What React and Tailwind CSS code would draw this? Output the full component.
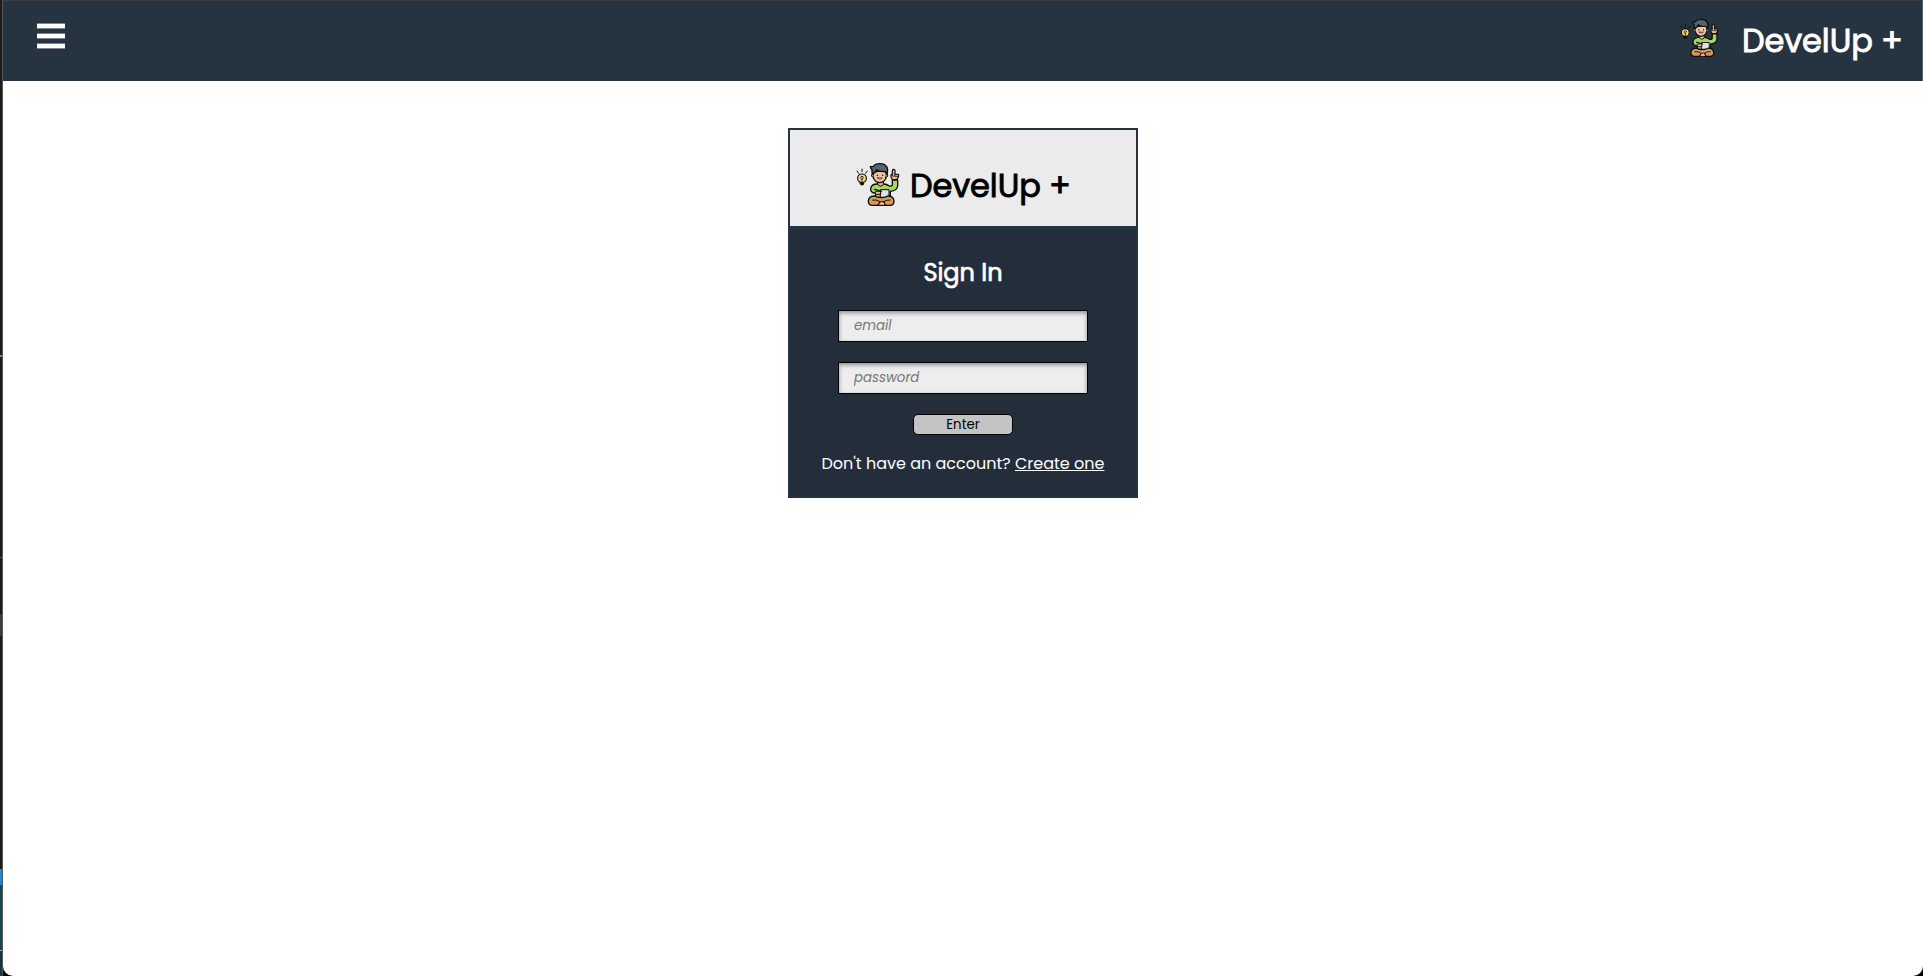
import React from "react";

function Mascot({ className }) {
  return (
    <svg viewBox="18 20 132 132" className={className} fill="none" stroke="#0b0b0b" strokeWidth="4" strokeLinecap="round" strokeLinejoin="round">
      <path d="M36 41v8M21 47l5 7M52 47l-5 7" strokeWidth="3" />
      <path d="M31 80h10v6l-3 3h-4l-3-3z" fill="#0b0b0b" strokeWidth="3" />
      <circle cx="36" cy="69" r="13" fill="#f3dc80" strokeWidth="3.5" />
      <path d="M36 79v-7M32 67a4 4 0 1 1 8 0l-4 5z" strokeWidth="2.5" />
      <path d="M127 73l-4-7V58l4-2V46q0-4 4-4t4 4v10l9 1q3 1 2 5-1 7-7 11z" fill="#eeb991" strokeWidth="3.5" />
      <path d="M127 57v5q5 2 8-1v-5M136 63h9" strokeWidth="2.5" />
      <path d="M82 86q-18 0-20 14-1 10 9 13h6v13h44v-18q21-2 22-16V74h-16v15q-3 6-11 2-7-4-13-5z" fill="#a4d661" />
      <path d="M84 76h16v12q-8 9-16 0z" fill="#eeb991" strokeWidth="3" />
      <path d="M69 50v13q4 18 20 19 17-1 20-19V44z" fill="#f1c49f" />
      <path d="M68 55q-5 1-3 7 1 4 5 4M110 55q5 1 3 7-1 4-5 4" fill="#eeb991" strokeWidth="3" />
      <path d="M67 56q-2-9-1-13-4-2-5-9l9-1q6-8 17-8 17-1 23 9 5 8 1 23l-6-9q-14 3-25-5-4 10-13 13z" fill="#56636f" />
      <path d="M82 59v1.5M98 59v1.5" strokeWidth="3.5" />
      <path d="M83 68h14q-7 8-14 0z" fill="#fff" strokeWidth="2" />
      <path d="M92 103h25v23H92z" fill="#dde1e8" strokeWidth="3" />
      <path d="M81 108l11-1v10H79q-5-1-4-6z" fill="#eeb991" strokeWidth="3" />
      <path d="M74 102l20 6" strokeWidth="4" />
      <path d="M74 122q-18 0-19 15 0 13 12 13h53q12 0 12-13-1-15-19-15-7 5-19 5-12 0-20-5z" fill="#d69959" />
      <path d="M91 140q6-4 11 0l4 10H84z" fill="#eeb991" strokeWidth="3" />
      <path d="M68 134q11-2 22 5l-6 10M120 134q-10-1-19 5l5 10" strokeWidth="3" />
    </svg>
  );
}

function Header() {
  return (
    <header className="flex h-[81px] items-start justify-between border-t border-r border-t-[#3b3c3d] border-r-[#53606b] bg-[#263341] pl-[34px] pr-[20px]">
      <button aria-label="Menu" className="mt-[22px] flex w-[28px] flex-col gap-1">
        <span className="h-[6px] w-full rounded-[1px] border-y border-[#7b848e] bg-white" />
        <span className="h-[6px] w-full rounded-[1px] border-y border-[#7b848e] bg-white" />
        <span className="h-[6px] w-full rounded-[1px] border-y border-[#7b848e] bg-white" />
      </button>
      <div className="flex items-start">
        <Mascot className="mt-[17px] mr-[23px] size-[39px]" />
        <span className="mt-[20px] w-[160px] whitespace-nowrap text-[32px] leading-[40px] tracking-[-0.1px] text-white [-webkit-text-stroke:0.9px_white]">DevelUp +</span>
      </div>
    </header>
  );
}

const inputClass =
  "block h-8 w-[250px] border border-black bg-[#ededed] px-[15px] text-[13.333px] italic shadow-[inset_0_2px_4px_rgba(0,0,0,0.4)] outline-none placeholder:text-[#757575]";

function SignInCard() {
  return (
    <main className="mx-auto mt-[47px] flex h-[370px] w-[350px] flex-col border-2 border-[#263341] bg-[#242e3a]">
      <div className="flex h-[100px] shrink-0 items-start border-b-4 border-[#263341] bg-[#ebebeb] pl-[66px]">
        <Mascot className="mt-[32px] mr-[10px] size-[44px]" />
        <span className="mt-[36px] w-[164px] whitespace-nowrap text-[32px] leading-[40px] tracking-[-0.1px] text-black [-webkit-text-stroke:0.9px_black]">DevelUp +</span>
      </div>
      <form className="flex flex-col items-center" onSubmit={(e) => e.preventDefault()}>
        <h1 className="mt-[27px] text-[24px] leading-[32px] text-white [-webkit-text-stroke:0.7px_white]">Sign In</h1>
        <input type="email" placeholder="email" className={inputClass + " mt-[21px]"} />
        <input type="password" placeholder="password" className={inputClass + " mt-5"} />
        <button className="mt-5 h-[21px] w-[100px] rounded-[5px] border border-black bg-[#c4c4c4] text-[13.333px] leading-[19px] text-black">Enter</button>
        <p className="mt-[17px] whitespace-nowrap text-[16px] leading-6 text-white">
          Don't have an account? <a href="#" className="underline">Create one</a>
        </p>
      </form>
    </main>
  );
}

function DesktopEdge() {
  return (
    <div className="flex w-[3px] shrink-0 flex-col border-r border-[#555]">
      <div className="h-[355px] bg-[#1c1c1d]" />
      <div className="h-[2px] bg-[#8b8b8b]" />
      <div className="h-[200px] bg-[#1a1a1b]" />
      <div className="h-px bg-[#555]" />
      <div className="h-[56px] bg-[#1a1a1b]" />
      <div className="h-[22px] bg-[#3b3b43]" />
      <div className="h-[233px] bg-[#1c1c1d]" />
      <div className="h-[16px] bg-[#168bdb]" />
      <div className="h-[65px] bg-[#164452]" />
      <div className="h-px bg-[#90a4ac]" />
      <div className="flex-1 bg-[#123644]" />
    </div>
  );
}

export default function App() {
  return (
    <div className="flex h-[976px] w-[1923px] overflow-hidden bg-black font-[Poppins,Inter,sans-serif]">
      <DesktopEdge />
      <div className="flex-1 rounded-b-[10px] bg-white">
        <Header />
        <SignInCard />
      </div>
    </div>
  );
}
